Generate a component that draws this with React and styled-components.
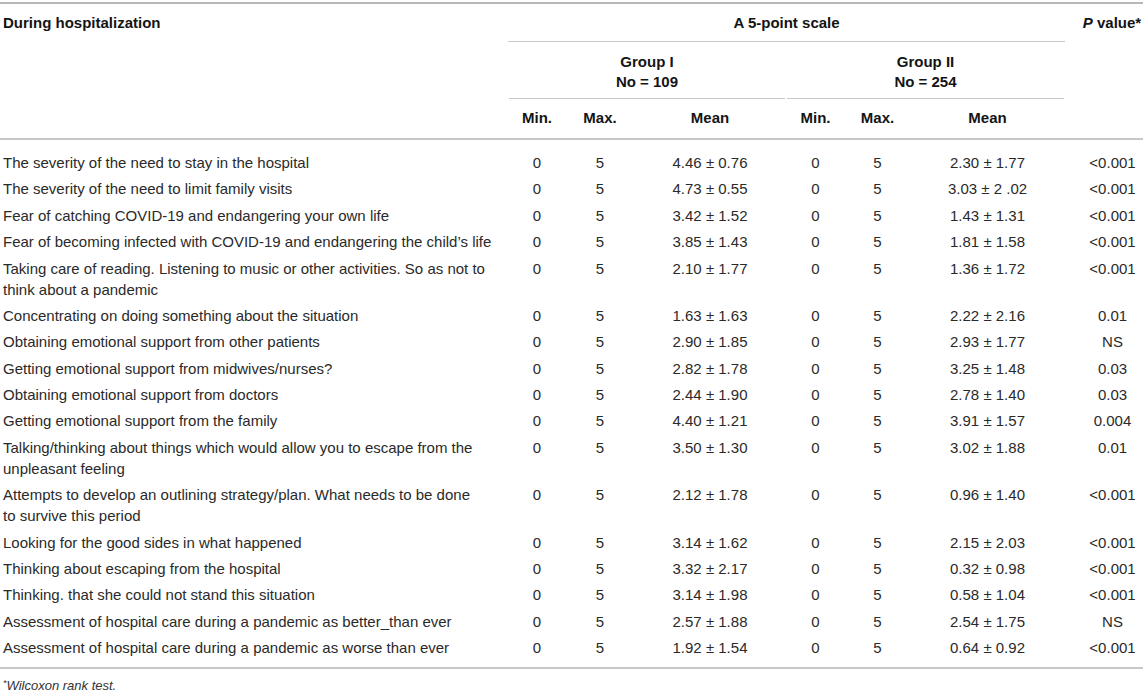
import React from 'react';
import styled, { createGlobalStyle } from 'styled-components';

const GlobalStyle = createGlobalStyle`
  body {
    margin: 0;
    background: #fff;
    font-family: "Liberation Sans", Arial, Helvetica, sans-serif;
  }
`;

const Wrap = styled.div`
  width: 1143px;
  padding-top: 2px;
`;

const Table = styled.table`
  width: 100%;
  table-layout: fixed;
  border-collapse: collapse;
  font-size: 15px;
  color: #2a2a2a;
`;

const HeadRow = styled.tr`
  border-bottom: ${p => (p.$last ? '2px solid #c8c8c8' : 'none')};
`;

const Th = styled.th`
  font-weight: bold;
  color: #141414;
  line-height: 20px;
  vertical-align: top;
  white-space: nowrap;
  text-align: ${p => p.$align || 'center'};
  padding: ${p => p.$pad || '9px 3px 8px'};
  border-bottom: ${p => (p.$line ? '1px solid #c8c8c8' : 'none')};
`;

const GroupTh = styled.th`
  padding: 0;
  vertical-align: top;
`;

const GroupLabel = styled.div`
  margin: 0 1px;
  padding: 10px 3px 6px;
  line-height: 20px;
  font-weight: bold;
  color: #141414;
  text-align: center;
  border-bottom: 1px solid #c8c8c8;
`;

const TopRule = styled.tr`
  border-top: 2px solid #b8b8b8;
`;

const BodyRow = styled.tr`
  border-bottom: ${p => (p.$last ? '2px solid #c8c8c8' : 'none')};
`;

const Td = styled.td`
  line-height: 21px;
  vertical-align: top;
  white-space: nowrap;
  text-align: ${p => p.$align || 'center'};
  padding: ${p => p.$top}px ${p => p.$right || 3}px ${p => p.$bottom}px ${p => p.$left || 3}px;
`;

const Line = styled.span`
  display: block;
`;

const Italic = styled.i`
  font-style: italic;
`;

const Footnote = styled.p`
  margin: 9px 0 0;
  padding-left: 3px;
  font-size: 13px;
  font-style: italic;
  color: #333;
  line-height: 16px;
`;

const Star = styled.sup`
  font-size: 9px;
  vertical-align: 4px;
  line-height: 0;
`;

const rows = [
  [['The severity of the need to stay in the hospital'], '4.46 ± 0.76', '2.30 ± 1.77', '<0.001'],
  [['The severity of the need to limit family visits'], '4.73 ± 0.55', '3.03 ± 2 .02', '<0.001'],
  [['Fear of catching COVID-19 and endangering your own life'], '3.42 ± 1.52', '1.43 ± 1.31', '<0.001'],
  [['Fear of becoming infected with COVID-19 and endangering the child’s life'], '3.85 ± 1.43', '1.81 ± 1.58', '<0.001'],
  [['Taking care of reading. Listening to music or other activities. So as not to', 'think about a pandemic'], '2.10 ± 1.77', '1.36 ± 1.72', '<0.001'],
  [['Concentrating on doing something about the situation'], '1.63 ± 1.63', '2.22 ± 2.16', '0.01'],
  [['Obtaining emotional support from other patients'], '2.90 ± 1.85', '2.93 ± 1.77', 'NS'],
  [['Getting emotional support from midwives/nurses?'], '2.82 ± 1.78', '3.25 ± 1.48', '0.03'],
  [['Obtaining emotional support from doctors'], '2.44 ± 1.90', '2.78 ± 1.40', '0.03'],
  [['Getting emotional support from the family'], '4.40 ± 1.21', '3.91 ± 1.57', '0.004'],
  [['Talking/thinking about things which would allow you to escape from the', 'unpleasant feeling'], '3.50 ± 1.30', '3.02 ± 1.88', '0.01'],
  [['Attempts to develop an outlining strategy/plan. What needs to be done', 'to survive this period'], '2.12 ± 1.78', '0.96 ± 1.40', '<0.001'],
  [['Looking for the good sides in what happened'], '3.14 ± 1.62', '2.15 ± 2.03', '<0.001'],
  [['Thinking about escaping from the hospital'], '3.32 ± 2.17', '0.32 ± 0.98', '<0.001'],
  [['Thinking. that she could not stand this situation'], '3.14 ± 1.98', '0.58 ± 1.04', '<0.001'],
  [['Assessment of hospital care during a pandemic as better_than ever'], '2.57 ± 1.88', '2.54 ± 1.75', 'NS'],
  [['Assessment of hospital care during a pandemic as worse than ever'], '1.92 ± 1.54', '0.64 ± 0.92', '<0.001'],
];

const widths = [508, 58, 68, 152, 59, 65, 155, 78];

export default function App() {
  return (
    <Wrap>
      <GlobalStyle />
      <Table>
        <colgroup>
          {widths.map((w, i) => (
            <col key={i} style={{ width: w }} />
          ))}
        </colgroup>
        <thead>
          <TopRule>
            <Th $align="left">During hospitalization</Th>
            <Th colSpan={6} $line>A 5-point scale</Th>
            <Th $pad="9px 0 8px 16px">
              <Italic>P</Italic> value*
            </Th>
          </TopRule>
          <tr>
            <th />
            <GroupTh colSpan={3}>
              <GroupLabel>
                Group I
                <br />
                No = 109
              </GroupLabel>
            </GroupTh>
            <GroupTh colSpan={3}>
              <GroupLabel>
                Group II
                <br />
                No = 254
              </GroupLabel>
            </GroupTh>
            <th />
          </tr>
          <HeadRow $last>
            <th />
            <Th $pad="9px 3px 10px">Min.</Th>
            <Th $pad="9px 3px 10px">Max.</Th>
            <Th $pad="9px 3px 10px">Mean</Th>
            <Th $pad="9px 3px 10px">Min.</Th>
            <Th $pad="9px 3px 10px">Max.</Th>
            <Th $pad="9px 3px 10px">Mean</Th>
            <th />
          </HeadRow>
        </thead>
        <tbody>
          {rows.map(([label, m1, m2, p], i) => {
            const first = i === 0;
            const last = i === rows.length - 1;
            const top = first ? 12 : 2.7;
            const bottom = last ? 9 : 2.7;
            return (
              <BodyRow key={i} $last={last}>
                <Td $align="left" $top={top} $bottom={bottom}>
                  {label.map((l, j) => (
                    <Line key={j}>{l}</Line>
                  ))}
                </Td>
                <Td $top={top} $bottom={bottom}>0</Td>
                <Td $top={top} $bottom={bottom}>5</Td>
                <Td $top={top} $bottom={bottom}>{m1}</Td>
                <Td $top={top} $bottom={bottom}>0</Td>
                <Td $top={top} $bottom={bottom}>5</Td>
                <Td $top={top} $bottom={bottom}>{m2}</Td>
                <Td $top={top} $bottom={bottom} $left={20}>{p}</Td>
              </BodyRow>
            );
          })}
        </tbody>
      </Table>
      <Footnote>
        <Star>*</Star>Wilcoxon rank test.
      </Footnote>
    </Wrap>
  );
}
